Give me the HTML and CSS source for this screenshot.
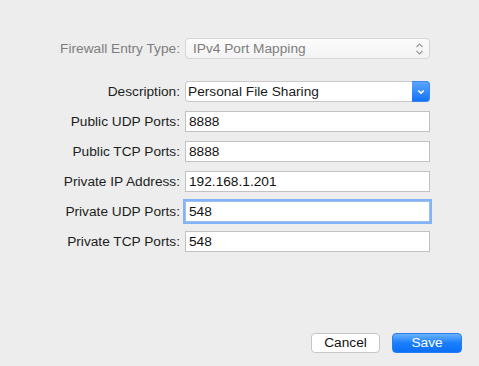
FILE: index.html
```html
<!DOCTYPE html>
<html>
<head>
<meta charset="utf-8">
<link rel="stylesheet" href="styles.css">
</head>
<body>
<div class="sheet">
  <form class="form">
    <label class="lbl lbl-dim top">Firewall Entry Type:</label>
    <div class="popup popup-dim top">
      <span class="popup-text">IPv4 Port Mapping</span>
      <svg class="stepper" width="9" height="14" viewBox="0 0 9 14"><path d="M1.5 5 L4.5 2 L7.5 5 M1.5 9 L4.5 12 L7.5 9" fill="none" stroke="#9a9a9a" stroke-width="1.2"/></svg>
    </div>

    <label class="lbl">Description:</label>
    <div class="popup popup-blue">
      <span class="popup-text">Personal File Sharing</span>
      <span class="popup-btn"><svg width="8" height="6" viewBox="0 0 8 6"><path d="M1.2 1.5 L4 4.2 L6.8 1.5" fill="none" stroke="#fff" stroke-width="1.6"/></svg></span>
    </div>

    <label class="lbl">Public UDP Ports:</label>
    <div class="field">8888</div>

    <label class="lbl">Public TCP Ports:</label>
    <div class="field">8888</div>

    <label class="lbl">Private IP Address:</label>
    <div class="field">192.168.1.201</div>

    <label class="lbl">Private UDP Ports:</label>
    <div class="field field-focus">548</div>

    <label class="lbl">Private TCP Ports:</label>
    <div class="field">548</div>
  </form>

  <div class="buttons">
    <button class="btn btn-cancel" type="button">Cancel</button>
    <button class="btn btn-save" type="button">Save</button>
  </div>
</div>
</body>
</html>
```
FILE: styles.css
```css
html, body {
  margin: 0;
  padding: 0;
  background: #ededed;
  font-family: "Liberation Sans", Arial, sans-serif;
  font-size: 13.7px;
  color: #1a1a1a;
}
.sheet {
  width: 479px;
  height: 366px;
  display: flex;
  flex-direction: column;
  padding-top: 38px;
  box-sizing: border-box;
}
.form {
  display: grid;
  grid-template-columns: 185px 245px;
  grid-template-rows: 34px repeat(6, 21px);
  row-gap: 9px;
  margin: 0;
}
.top {
  align-self: start;
}
.lbl {
  text-align: right;
  padding-right: 5px;
  line-height: 22px;
  height: 21px;
  white-space: nowrap;
  color: #1d1d1d;
}
.lbl-dim {
  color: #7d7d7d;
}
.popup {
  position: relative;
  box-sizing: border-box;
  height: 21px;
  border: 1px solid #c9c9c9;
  border-radius: 4px;
  background: #fff;
  display: flex;
  align-items: center;
  padding-left: 3px;
  line-height: 20px;
}
.popup-dim {
  background: linear-gradient(#fbfbfb, #f3f3f3);
  border-color: #d6d6d6;
  color: #7d7d7d;
  padding-left: 7px;
}
.popup-text {
  flex: 1;
  padding-top: 1px;
}
.stepper {
  margin-right: 5px;
}
.popup-blue {
  border-right: none;
  padding-left: 2px;
}
.popup-btn {
  width: 18px;
  height: 21px;
  margin-top: -1px;
  margin-bottom: -1px;
  border-radius: 0 4px 4px 0;
  background: linear-gradient(#5aa6fb, #1472f9);
  display: flex;
  align-items: center;
  justify-content: center;
  box-sizing: border-box;
  border: 1px solid #3b86f5;
  border-left: none;
}
.field {
  box-sizing: border-box;
  height: 21px;
  border: 1px solid #c2c2c2;
  background: #fff;
  padding-left: 3px;
  line-height: 20px;
  color: #111;
}
.field-focus {
  border-color: #9dbff3;
  box-shadow: 0 0 0 2px #83b3f7;
}
.buttons {
  margin-top: auto;
  margin-bottom: 13px;
  display: flex;
  justify-content: flex-end;
  gap: 12px;
  padding-right: 17px;
}
.btn {
  font-family: "Liberation Sans", Arial, sans-serif;
  font-size: 13.7px;
  height: 20px;
  border-radius: 4px;
  padding: 0;
  line-height: 18px;
  box-sizing: border-box;
}
.btn-cancel {
  width: 69px;
  background: #fff;
  border: 1px solid #c6c6c6;
  color: #111;
}
.btn-save {
  width: 70px;
  background: linear-gradient(#6ab1fb, #1a7ffb 50%, #0d6ff8);
  border: 1px solid #2a7cf3;
  color: #fff;
}
```
